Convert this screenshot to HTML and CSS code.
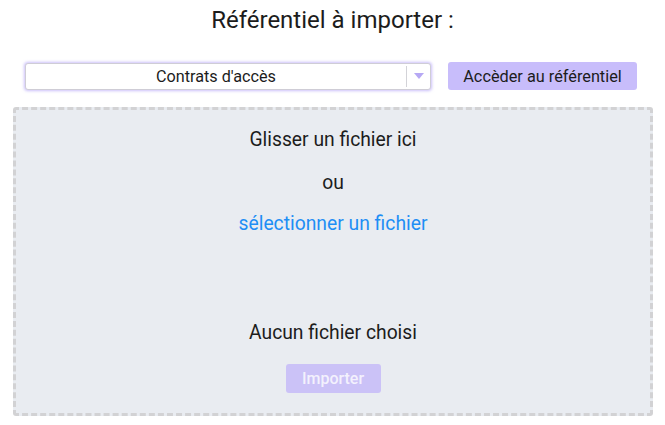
FILE: index.html
```html
<!DOCTYPE html>
<html lang="fr">
<head>
<meta charset="utf-8">
<title>Référentiel à importer</title>
<link rel="stylesheet" href="styles.css">
</head>
<body>
<div class="page">
  <h1 class="title">Référentiel à importer :</h1>
  <div class="toolbar">
    <div class="select">
      <span class="select-value">Contrats d'accès</span>
      <span class="select-arrow">
        <svg width="10" height="6" viewBox="0 0 10 6"><path d="M0 0 L10 0 L5 6 Z" fill="#b6a8f4"/></svg>
      </span>
    </div>
    <button class="btn btn-access">Accèder au référentiel</button>
  </div>
  <div class="dropzone">
    <p class="dz-line dz-first">Glisser un fichier ici</p>
    <p class="dz-line dz-or">ou</p>
    <p class="dz-line dz-link">sélectionner un fichier</p>
    <p class="dz-line dz-none">Aucun fichier choisi</p>
    <button class="btn btn-import" disabled>Importer</button>
  </div>
</div>
</body>
</html>
```
FILE: styles.css
```css
html, body {
  margin: 0;
  padding: 0;
  background: #ffffff;
}
body {
  font-family: Roboto, "Liberation Sans", sans-serif;
  color: #1f1f1f;
}
.page {
  display: flex;
  flex-direction: column;
  width: 665px;
}
.title {
  margin: 7px 0 0 0;
  height: 26px;
  line-height: 26px;
  font-size: 24px;
  font-weight: 400;
  text-align: center;
  color: #1c1c1c;
}
.toolbar {
  display: flex;
  align-items: center;
  margin-top: 29px;
  padding-left: 25px;
  gap: 17px;
}
.select {
  box-sizing: border-box;
  width: 406px;
  height: 27px;
  border: 1px solid #cfcdd6;
  border-radius: 3px;
  background: #fff;
  box-shadow: 0 0 3px 1px rgba(160, 140, 245, 0.55);
  display: flex;
  align-items: stretch;
}
.select-value {
  flex: 1;
  text-align: center;
  font-size: 16.2px;
  line-height: 25px;
  color: #1c1c1c;
}
.select-arrow {
  width: 23px;
  border-left: 1px solid #d3d3d8;
  display: flex;
  align-items: center;
  justify-content: center;
  margin: 2px 0;
}
.btn {
  font-family: Roboto, "Liberation Sans", sans-serif;
  border: none;
  border-radius: 3px;
  padding: 0;
}
.btn-access {
  width: 189px;
  height: 28px;
  background: #c8bdfb;
  color: #1c1c1c;
  font-size: 16.3px;
}
.dropzone {
  box-sizing: border-box;
  margin: 17px 0 0 13px;
  width: 640px;
  height: 309px;
  border: 3px dashed #d2d2d4;
  border-radius: 3px;
  background: #e9ecf1;
  display: flex;
  flex-direction: column;
  align-items: center;
}
.dz-line {
  margin: 0;
  height: 24px;
  line-height: 24px;
  font-size: 19.3px;
  color: #1c1c1c;
}
.dz-first { margin-top: 18px; }
.dz-or { margin-top: 19px; }
.dz-link { margin-top: 17px; color: #1e8ef5; }
.dz-none { margin-top: 85px; }
.btn-import {
  margin-top: 19px;
  width: 95px;
  height: 29px;
  background: #cbc2f7;
  color: #f3f1fd;
  font-size: 16px;
  font-weight: 500;
}
```
